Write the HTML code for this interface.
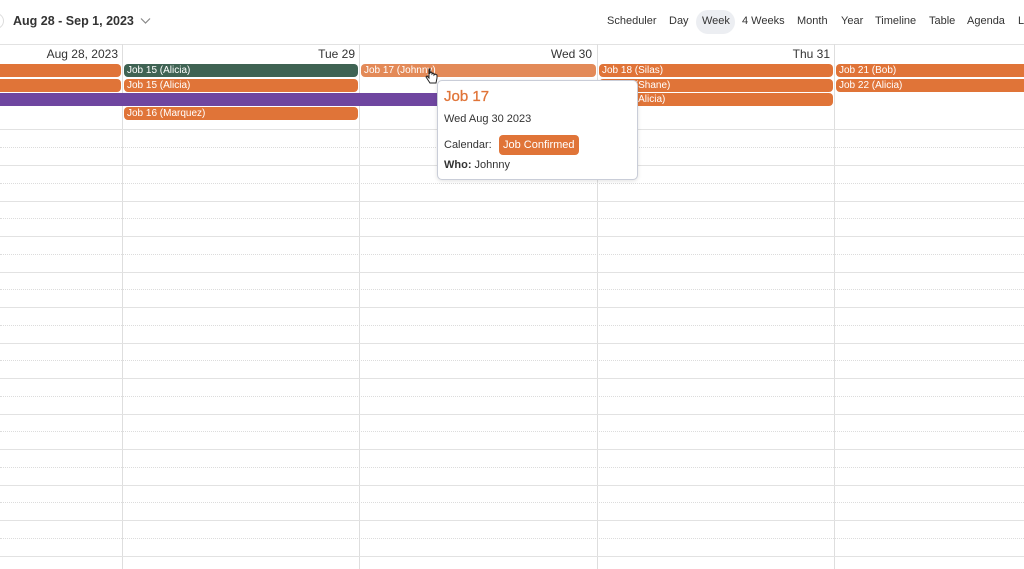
<!DOCTYPE html>
<html><head><style>
body{margin:0;width:1024px;height:569px;overflow:hidden;background:#fff;font-family:"Liberation Sans",sans-serif;position:relative}
.a{position:absolute}
.ev{position:absolute;height:13px;border-radius:4px;background:#e07438;color:#fff;font-size:10px;line-height:14px;padding-left:3px;box-sizing:border-box;white-space:nowrap;overflow:hidden}
.vl{position:absolute;top:44px;bottom:0;width:1px;background:#dedede}
.hl{position:absolute;left:0;right:0;height:1px;background:#e2e2e2}
.dl{position:absolute;left:0;right:0;height:0;border-top:1px dotted #dcdcdc}
</style></head><body>
<div class="a" style="left:-12px;top:13px;width:14px;height:14px;border:1px solid #ddd;border-radius:50%"></div>
<div class="a" style="left:13px;top:14px;font-size:12.5px;font-weight:bold;color:#333">Aug 28 - Sep 1, 2023</div>
<svg class="a" style="left:140px;top:17px" width="11" height="8"><path d="M1 1.5L5.5 6L10 1.5" stroke="#888" fill="none" stroke-width="1.2"/></svg>
<div class="a" style="left:696px;top:10px;width:39px;height:24px;border-radius:12px;background:#eceef2"></div>
<div class="a" style="top:15px;left:0;font-size:11px;color:#333">
<span class="a" style="left:607px">Scheduler</span><span class="a" style="left:669px">Day</span><span class="a" style="left:702px">Week</span><span class="a" style="left:742px">4&nbsp;Weeks</span><span class="a" style="left:797px">Month</span><span class="a" style="left:841px">Year</span><span class="a" style="left:875px">Timeline</span><span class="a" style="left:929px">Table</span><span class="a" style="left:967px">Agenda</span><span class="a" style="left:1018px">L</span></div>
<div class="hl" style="top:44px"></div>
<div class="vl" style="left:122px"></div><div class="vl" style="left:359px"></div><div class="vl" style="left:597px"></div><div class="vl" style="left:834px"></div>
<div class="a" style="top:47px;font-size:12px;color:#333;left:0;width:1024px">
<span class="a" style="right:906px">Aug 28, 2023</span><span class="a" style="right:669px">Tue 29</span><span class="a" style="right:432px">Wed 30</span><span class="a" style="right:194px">Thu 31</span></div>
<div class="hl" style="top:129px"></div>
<div class="hl" style="top:165px"></div><div class="hl" style="top:201px"></div><div class="hl" style="top:236px"></div><div class="hl" style="top:272px"></div><div class="hl" style="top:307px"></div><div class="hl" style="top:343px"></div><div class="hl" style="top:378px"></div><div class="hl" style="top:414px"></div><div class="hl" style="top:449px"></div><div class="hl" style="top:485px"></div><div class="hl" style="top:520px"></div><div class="hl" style="top:556px"></div>
<div class="dl" style="top:147px"></div><div class="dl" style="top:183px"></div><div class="dl" style="top:218px"></div><div class="dl" style="top:254px"></div><div class="dl" style="top:289px"></div><div class="dl" style="top:325px"></div><div class="dl" style="top:360px"></div><div class="dl" style="top:396px"></div><div class="dl" style="top:431px"></div><div class="dl" style="top:467px"></div><div class="dl" style="top:502px"></div><div class="dl" style="top:538px"></div>
<div class="ev" style="left:-4px;width:125px;top:64px"></div>
<div class="ev" style="left:-4px;width:125px;top:79px"></div>
<div class="ev" style="left:124px;width:234px;top:64px;background:#3f6353">Job 15 (Alicia)</div>
<div class="ev" style="left:124px;width:234px;top:79px">Job 15 (Alicia)</div>
<div class="ev" style="left:0;width:600px;top:93px;background:#6f46a0;border-radius:0"></div>
<div class="ev" style="left:124px;width:234px;top:107px">Job 16 (Marquez)</div>
<div class="ev" style="left:361px;width:235px;top:64px;background:#e38a58">Job 17 (Johnny)</div>
<div class="ev" style="left:599px;width:234px;top:64px">Job 18 (Silas)</div>
<div class="ev" style="left:599px;width:234px;top:79px">Job 19 (Shane)</div>
<div class="ev" style="left:599px;width:234px;top:93px">Job 20 (Alicia)</div>
<div class="ev" style="left:836px;width:200px;top:64px">Job 21 (Bob)</div>
<div class="ev" style="left:836px;width:200px;top:79px">Job 22 (Alicia)</div>
<div class="a" style="left:437px;top:80px;width:199px;height:98px;background:#fff;border:1px solid #c9cdd8;border-radius:5px;box-shadow:0 1px 4px rgba(0,0,0,.12);font-family:'Liberation Sans',sans-serif;color:#333">
<div class="a" style="left:6px;top:7px;font-size:15px;color:#e07438;-webkit-text-stroke:0.3px #e07438">Job 17</div>
<div class="a" style="left:6px;top:32px;font-size:11px">Wed Aug 30 2023</div>
<div class="a" style="left:6px;top:58px;font-size:11px">Calendar:</div>
<div class="a" style="left:61px;top:54px;height:20px;padding:0 4px;line-height:20px;background:#e07438;color:#fff;border-radius:4px;font-size:11px">Job Confirmed</div>
<div class="a" style="left:6px;top:78px;font-size:11px"><b>Who:</b> Johnny</div>
</div>
<svg class="a" style="left:425px;top:68px" width="13" height="16"><path d="M4 1v9L2 8 1 9l4 6h6l1-5V7l-2-1-1 1V6L8 5 7 6V5L6 4 5 5V1z" fill="#fff" stroke="#222" stroke-width="1"/></svg>
</body></html>
